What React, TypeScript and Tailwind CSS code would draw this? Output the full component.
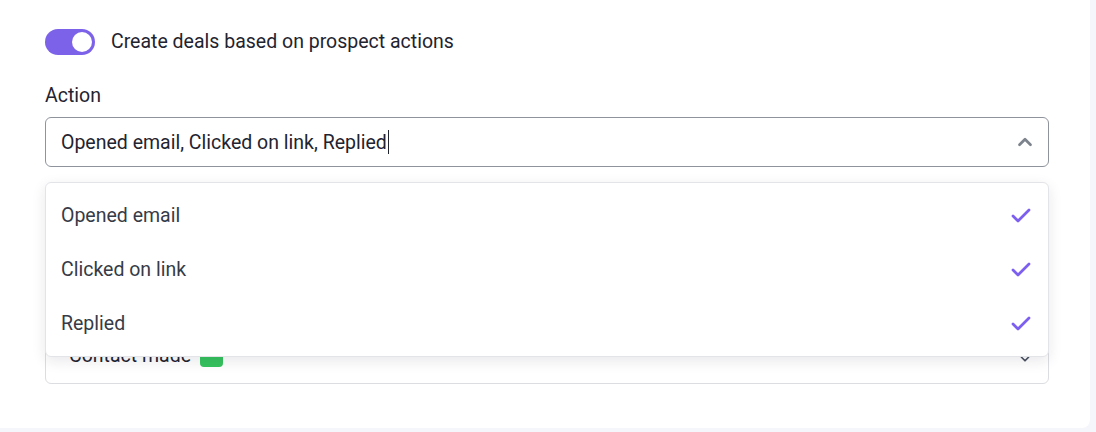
import React from "react";
import { Check, ChevronUp, ChevronDown } from "lucide-react";

export default function App() {
  const items = ["Opened email", "Clicked on link", "Replied"];
  return (
    <div
      className="w-[1096px] h-[432px] bg-[#f5f5fc] overflow-hidden"
      style={{ fontFamily: "Roboto, 'Noto Sans', sans-serif" }}
    >
      <div className="relative w-[1090px] h-[428px] bg-white rounded-br-[8px] pl-[45px] pr-[41px] pt-[29px]">
        {/* toggle row */}
        <div className="flex items-center gap-[16px] h-[26px]">
          <div className="relative w-[50px] h-[26px] rounded-full bg-[#7c61e9] flex items-center justify-end pr-[3px]">
            <div className="w-[20px] h-[20px] rounded-full bg-white" />
          </div>
          <span className="text-[19.5px] leading-[24px] text-[#1f2430]">
            Create deals based on prospect actions
          </span>
        </div>

        {/* Action */}
        <div className="mt-[29px] text-[19.5px] leading-[24px] text-[#1f2430]">Action</div>
        <div className="mt-[9px] h-[50px] w-[1004px] border border-[#8f949c] rounded-[6px] flex items-center pl-[15px] pr-[12px]">
          <span className="text-[19.5px] leading-[24px] text-[#1f2430] mt-[1px]">
            Opened email, Clicked on link, Replied
          </span>
          <span className="w-[1.5px] h-[24px] bg-[#1f2430] ml-[1px]" />
          <div className="flex-1" />
          <ChevronUp size={22} strokeWidth={3} className="text-[#7d838c]" />
        </div>

        {/* hidden section under dropdown */}
        <div className="mt-[167px] h-[50px] w-[1004px] border border-[#dcdde1] rounded-[6px] flex items-center pl-[23px] pr-[16px]">
          <span className="text-[19.5px] leading-[24px] text-[#1f2430] -mt-[6px]">Contact made</span>
          <span className="ml-[9px] w-[23px] h-[20px] rounded-[4px] bg-[#36c35e] -mt-[4px]" />
          <div className="flex-1" />
          <ChevronDown size={14} strokeWidth={3} className="text-[#4b5260]" />
        </div>

        {/* dropdown overlay */}
        <div className="absolute left-[45px] top-[182px] w-[1004px] bg-white border border-[#e3e4e8] rounded-[6px] shadow-[0_4px_14px_rgba(30,30,60,0.10)] pt-[6px] pb-[5px]">
          {items.map((it) => (
            <div key={it} className="h-[54px] flex items-center pl-[15px] pr-[15px]">
              <span className="text-[19.5px] leading-[24px] text-[#363b47]">{it}</span>
              <div className="flex-1" />
              <Check size={24} strokeWidth={2.75} className="text-[#7c5ff0]" />
            </div>
          ))}
        </div>
      </div>
    </div>
  );
}
